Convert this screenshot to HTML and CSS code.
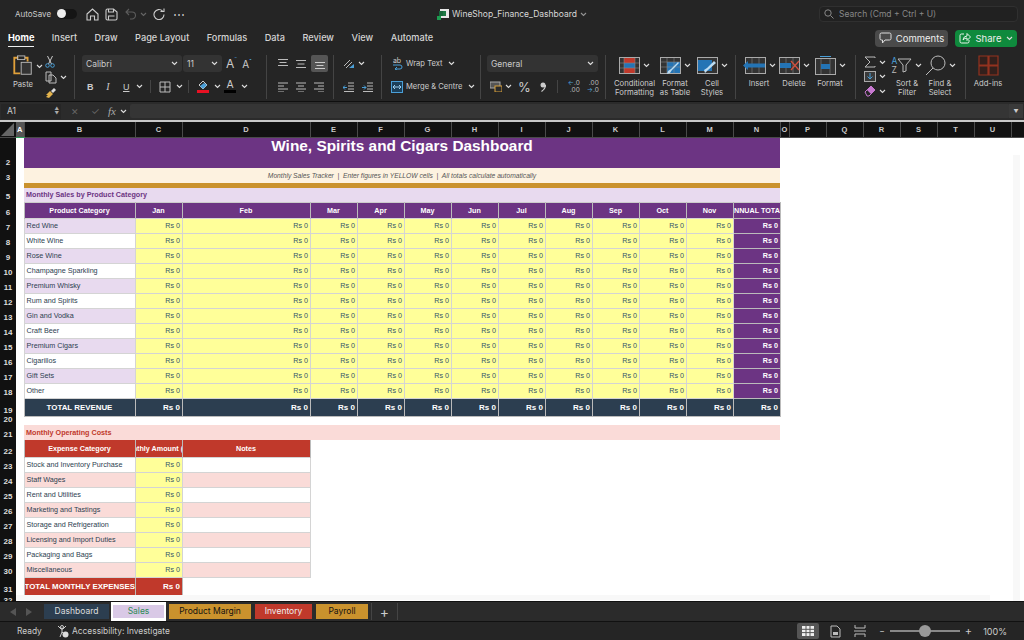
FILE: index.html
```html
<!DOCTYPE html>
<html lang="en">
<head>
    <meta charset="UTF-8">
    <title>WineShop_Finance_Dashboard</title>
    <link rel="stylesheet" href="styles.css">
</head>
<body>
    <svg class="defs" width="0" height="0">
        <symbol id="chev" viewBox="0 0 7 5"><path d="M1 1l2.500 2.500L6 1" fill="none" stroke="#ddd" stroke-width="1.100"/></symbol>
        <symbol id="lines-l" viewBox="0 0 12 10"><path d="M1 1h10M1 4h6M1 7h10M1 10h6" fill="none" stroke="#bbb"/></symbol>
        <symbol id="lines-c" viewBox="0 0 12 10"><path d="M1 1h10M3 4h6M1 7h10M3 10h6" fill="none" stroke="#bbb"/></symbol>
        <symbol id="lines-r" viewBox="0 0 12 10"><path d="M1 1h10M5 4h6M1 7h10M5 10h6" fill="none" stroke="#bbb"/></symbol>
        <symbol id="va-top" viewBox="0 0 12 12"><path d="M1 1.500h10M2.500 4.500h7M1 7.500h10" fill="none" stroke="#bbb"/></symbol>
        <symbol id="va-mid" viewBox="0 0 12 12"><path d="M1 2.500h10M2.500 6h7M1 9.500h10" fill="none" stroke="#bbb"/></symbol>
        <symbol id="va-bot" viewBox="0 0 12 12"><path d="M1 4.500h10M2.500 7.500h7M1 10.500h10" fill="none" stroke="#ccc"/></symbol>
    </svg>

    <header class="titlebar">
        <div class="quick">
            <span class="autosave">AutoSave</span>
            <span class="toggle"><span class="knob"></span></span>
            <svg class="q-home" width="13" height="13" viewBox="0 0 13 13"><path d="M1 6l5.500-5L12 6v6H8.500V8h-4v4H1z" fill="none" stroke="#ccc" stroke-width="1.100"/></svg>
            <svg class="q-save" width="13" height="13" viewBox="0 0 13 13"><path d="M1 2.500Q1 1 2.500 1h6L12 4v6.500Q12 12 10.500 12h-8Q1 12 1 10.500zM3.500 1v3h5V1M3.500 12V8h6" fill="none" stroke="#ccc" stroke-width="1.100"/></svg>
            <svg class="q-undo" width="12" height="12" viewBox="0 0 12 12"><path d="M4 1L1 4l3 3M1 4h6a3.500 3.500 0 0 1 0 7H5" fill="none" stroke="#5c5c5c" stroke-width="1.100"/></svg>
            <svg class="q-chev" width="7" height="5"><use href="#chev" opacity=".35"/></svg>
            <svg class="q-redo" width="12" height="12" viewBox="0 0 12 12"><path d="M9.500 2.500A5 5 0 1 0 11 6M7.500 3H11V0" fill="none" stroke="#ccc" stroke-width="1.100" transform="translate(0 .5)"/></svg>
            <span class="dots">&#8943;</span>
        </div>
        <div class="doc">
            <svg width="12" height="12" viewBox="0 0 12 12"><rect x="3" y="1" width="9" height="9" fill="#e8e8e8"/><rect x="6" y="3" width="3" height="5" fill="#1e7a45"/><rect x="0" y="8" width="4" height="4" fill="#1d9c50"/><rect x="2" y="3" width="4" height="5" fill="#17693b"/></svg>
            <span>WineShop_Finance_Dashboard</span>
            <svg width="7" height="5"><use href="#chev" opacity=".6"/></svg>
        </div>
        <div class="search-wrap">
            <div class="search">
                <svg width="10" height="10" viewBox="0 0 10 10"><circle cx="4" cy="4" r="3.200" fill="none" stroke="#888"/><path d="M6.500 6.500L9.500 9.500" stroke="#888"/></svg>
                <span>Search (Cmd + Ctrl + U)</span>
            </div>
        </div>
    </header>

    <nav class="menubar">
        <a class="menu active">Home</a>
        <a class="menu">Insert</a>
        <a class="menu">Draw</a>
        <a class="menu">Page Layout</a>
        <a class="menu">Formulas</a>
        <a class="menu">Data</a>
        <a class="menu">Review</a>
        <a class="menu">View</a>
        <a class="menu">Automate</a>
        <span class="menu-space"></span>
        <button class="comments">
            <svg width="13" height="12" viewBox="0 0 13 12"><path d="M2.500 1h8Q12 1 12 2.500v4Q12 8 10.500 8H6L3.500 11V8h-1Q1 8 1 6.500v-4Q1 1 2.500 1z" fill="none" stroke="#ddd"/></svg>
            Comments
        </button>
        <button class="share">
            <svg width="12" height="12" viewBox="0 0 12 12"><path d="M5 2H2.500Q1 2 1 3.500v6Q1 11 2.500 11h6Q10 11 10 9.500V8M4 8Q4.500 4 8 4V1.500L11.500 5 8 8.500V6Q5.500 6 4 8z" fill="none" stroke="#e8f5ec"/></svg>
            Share
            <svg width="7" height="5"><use href="#chev"/></svg>
        </button>
    </nav>

    <section class="ribbon">
        <div class="group g-clip">
            <div class="paste">
                <svg width="22" height="22" viewBox="0 0 22 24"><path d="M6 3H1.500v17H8" fill="none" stroke="#e0a03a" stroke-width="2"/><path d="M13 3h3v4" fill="none" stroke="#e0a03a" stroke-width="2"/><rect x="5" y="1" width="8" height="4" fill="none" stroke="#bbb"/><rect x="9" y="8" width="11" height="13" fill="#333" stroke="#bbb"/></svg>
                <span class="label">Paste</span>
            </div>
            <svg class="c-chev" width="7" height="5"><use href="#chev"/></svg>
            <div class="clip-tools">
                <svg width="10" height="12" viewBox="0 0 10 12"><path d="M2.500 0l4 8M7.500 0l-4 8" stroke="#ccc" fill="none"/><circle cx="2.500" cy="9.500" r="1.800" fill="none" stroke="#4a9fd8"/><circle cx="7.500" cy="9.500" r="1.800" fill="none" stroke="#4a9fd8"/></svg>
                <div class="tool-row">
                    <svg width="12" height="13" viewBox="0 0 12 13"><path d="M1 1h5v9H1zM4 4h4l3 3v5H4z" fill="#2a2a2a" stroke="#bbb"/></svg>
                    <svg width="7" height="5"><use href="#chev"/></svg>
                </div>
                <svg width="12" height="12" viewBox="0 0 12 12"><path d="M5 4l3 3-4 4-3-1 2-2-2 0z" fill="#e3b34c"/><path d="M6 4l3-3 2 2-3 3z" fill="#ddd"/></svg>
            </div>
        </div>

        <div class="group g-font">
            <div class="line">
                <div class="select font-select"><span>Calibri</span><svg width="7" height="5"><use href="#chev"/></svg></div>
                <div class="select size-select"><span>11</span><svg width="7" height="5"><use href="#chev"/></svg></div>
                <span class="grow">A<sup>&#710;</sup></span>
                <span class="shrink">A<sup>&#711;</sup></span>
            </div>
            <div class="line font-line">
                <b class="f-b">B</b>
                <i class="f-i">I</i>
                <u class="f-u">U</u>
                <svg width="7" height="5"><use href="#chev"/></svg>
                <span class="vsep vsep-a"></span>
                <svg width="12" height="12" viewBox="0 0 12 12"><path d="M1 1h10v10H1zM6 1v10M1 6h10" fill="none" stroke="#bbb"/></svg>
                <svg width="7" height="5"><use href="#chev"/></svg>
                <span class="vsep"></span>
                <svg width="12" height="13" viewBox="0 0 12 13"><path d="M6 1l4 4-4 4-4-4z" fill="none" stroke="#ccc"/><path d="M7 3l3 2-4 4-3-3z" fill="#4a9fd8"/><rect y="10" width="12" height="3" fill="#e81123"/></svg>
                <svg width="7" height="5"><use href="#chev"/></svg>
                <span class="color-a">A</span>
                <svg width="7" height="5"><use href="#chev"/></svg>
            </div>
        </div>

        <div class="group g-align">
            <div class="line">
                <svg width="12" height="12"><use href="#va-top"/></svg>
                <svg width="12" height="12"><use href="#va-mid"/></svg>
                <span class="picked"><svg width="12" height="12"><use href="#va-bot"/></svg></span>
            </div>
            <div class="line">
                <svg width="12" height="10"><use href="#lines-l"/></svg>
                <svg width="12" height="10"><use href="#lines-c"/></svg>
                <svg width="12" height="10"><use href="#lines-r"/></svg>
            </div>
        </div>

        <div class="group g-orient">
            <div class="line">
                <svg width="12" height="12" viewBox="0 0 12 12"><path d="M1 8l6-6M3 10l6-6" stroke="#bbb" fill="none"/><path d="M6 10l5-4v4z" fill="#4a9fd8"/></svg>
                <svg width="7" height="5"><use href="#chev"/></svg>
            </div>
            <div class="line">
                <svg width="11" height="10" viewBox="0 0 11 10"><path d="M5 1h6M5 4h6M5 7h6M1 9.500h10" stroke="#bbb"/><path d="M4 5.500H0M2 3.500L0 5.500l2 2" stroke="#4a9fd8" fill="none"/></svg>
                <svg width="11" height="10" viewBox="0 0 11 10"><path d="M5 1h6M5 4h6M5 7h6M1 9.500h10" stroke="#bbb"/><path d="M0 5.500h4M2 3.500l2 2-2 2" stroke="#4a9fd8" fill="none"/></svg>
            </div>
        </div>

        <div class="group g-wrap">
            <div class="line">
                <span class="ab"><span class="ab-t">ab</span><svg width="12" height="6" viewBox="0 0 12 6"><path d="M2 1h7a2 2 0 0 1 0 4H4M6 3L4 5l2 1" fill="none" stroke="#4a9fd8"/></svg></span>
                <span class="txt">Wrap Text</span>
                <svg width="7" height="5"><use href="#chev"/></svg>
            </div>
            <div class="line">
                <svg width="12" height="12" viewBox="0 0 12 12"><rect x=".5" y=".5" width="11" height="11" fill="#1c3f59" stroke="#4a9fd8"/><path d="M2 6h8M2 6l2-2M2 6l2 2M10 6L8 4M10 6L8 8" fill="none" stroke="#9fd0f0"/></svg>
                <span class="txt">Merge &amp; Centre</span>
                <svg width="7" height="5"><use href="#chev"/></svg>
            </div>
        </div>

        <div class="group g-num">
            <div class="line">
                <div class="select num-select"><span>General</span><svg width="7" height="5"><use href="#chev"/></svg></div>
            </div>
            <div class="line">
                <svg class="n-cur" width="12" height="11" viewBox="0 0 12 11"><rect y="1" width="10" height="6" fill="#555" stroke="#aaa"/><rect x="5" y="5" width="7" height="6" fill="#2a2a2a" stroke="#d9a13b"/></svg>
                <svg width="7" height="5"><use href="#chev"/></svg>
                <span class="n-pct">%</span>
                <svg class="n-comma" width="6" height="10" viewBox="0 0 6 10"><circle cx="3" cy="3" r="2.500" fill="#ccc"/><path d="M5.500 3Q5.500 7 1.500 9.500" fill="none" stroke="#ccc" stroke-width="1.300"/></svg>
                <span class="vsep n-sep"></span>
                <span class="dec"><em>&#8592;</em>.0<br>.00</span>
                <span class="dec"><em></em>.00<br><em>&#8594;</em>.0</span>
            </div>
        </div>

        <div class="group g-styles">
            <div class="big b-cond">
                <div class="big-icon">
                    <svg width="21" height="17" viewBox="0 0 21 17"><rect x=".5" y=".5" width="20" height="16" fill="#333" stroke="#aaa"/><path d="M5 1h11v5H5z" fill="#c0392b"/><path d="M5 6h11v5H5z" fill="#2474b5"/><path d="M5 11h11v5H5z" fill="#c0392b"/><path d="M5 1v15M16 1v15M1 6h19M1 11h19" stroke="#888" stroke-width=".6"/></svg>
                    <svg width="7" height="5"><use href="#chev"/></svg>
                </div>
                <span class="label">Conditional<br>Formatting</span>
            </div>
            <div class="big b-table">
                <div class="big-icon">
                    <svg width="21" height="17" viewBox="0 0 21 17"><rect x=".5" y=".5" width="20" height="16" fill="#333" stroke="#aaa"/><rect x="7" y="5" width="13" height="11" fill="#2474b5"/><path d="M7 1v15M14 1v15M1 5h19M1 10h19" stroke="#888" stroke-width=".6"/><path d="M19 6l-7 7-2 3-3 1 1-3 3-2 7-7z" fill="#bcdcf2"/></svg>
                    <svg width="7" height="5"><use href="#chev"/></svg>
                </div>
                <span class="label">Format<br>as Table</span>
            </div>
            <div class="big b-cell">
                <div class="big-icon">
                    <svg width="21" height="17" viewBox="0 0 21 17"><rect x=".5" y=".5" width="20" height="16" fill="#333" stroke="#aaa"/><rect x="1" y="3" width="14" height="11" fill="#2474b5"/><path d="M19 6l-8 7-3 3-1-3 3-2 7-7z" fill="#bcdcf2"/></svg>
                    <svg width="7" height="5"><use href="#chev"/></svg>
                </div>
                <span class="label">Cell<br>Styles</span>
            </div>
        </div>

        <div class="group g-cells">
            <div class="big b-ins">
                <div class="big-icon">
                    <svg width="23" height="17" viewBox="0 0 23 17"><rect x="2.500" y=".5" width="20" height="16" fill="#333" stroke="#aaa"/><path d="M9 1v15M16 1v15" stroke="#888" stroke-width=".6"/><path d="M0 8.500L5 4v2.500h17v4H5V13z" fill="#2474b5"/></svg>
                    <svg width="7" height="5"><use href="#chev"/></svg>
                </div>
                <span class="label">Insert</span>
            </div>
            <div class="big b-del">
                <div class="big-icon">
                    <svg width="21" height="17" viewBox="0 0 21 17"><rect x=".5" y=".5" width="20" height="16" fill="#333" stroke="#aaa"/><path d="M7 1v15M14 1v15" stroke="#888" stroke-width=".6"/><rect x="1" y="6" width="11" height="5" fill="#2474b5"/><path d="M12 4l8 9M20 4l-8 9" stroke="#d1503f" stroke-width="1.300"/></svg>
                    <svg width="7" height="5"><use href="#chev"/></svg>
                </div>
                <span class="label">Delete</span>
            </div>
            <div class="big b-fmt">
                <div class="big-icon">
                    <svg width="21" height="19" viewBox="0 0 21 19"><path d="M5 .5h11" stroke="#4a9fd8"/><rect x=".5" y="2.500" width="20" height="16" fill="#333" stroke="#aaa"/><path d="M6 3v15M15 3v15" stroke="#888" stroke-width=".6"/><rect x="6" y="8" width="9" height="5" fill="#2474b5"/></svg>
                    <svg width="7" height="5"><use href="#chev"/></svg>
                </div>
                <span class="label">Format</span>
            </div>
        </div>

        <div class="group g-edit">
            <div class="edit-col">
                <div class="tool-row">
                    <svg width="12" height="12" viewBox="0 0 12 12"><path d="M11 2V1H1l5 5-5 5h10v-1" fill="none" stroke="#bbb"/></svg>
                    <svg width="7" height="5"><use href="#chev"/></svg>
                </div>
                <div class="tool-row">
                    <svg width="12" height="11" viewBox="0 0 12 11"><rect x=".5" y=".5" width="11" height="10" fill="#3a3a3a" stroke="#aaa"/><path d="M6 2v6M3.500 5.500L6 8l2.500-2.500" fill="none" stroke="#4a9fd8"/></svg>
                    <svg width="7" height="5"><use href="#chev"/></svg>
                </div>
                <div class="tool-row">
                    <svg width="12" height="12" viewBox="0 0 12 12"><path d="M1 7l6-6 4 4-6 6H3z" fill="none" stroke="#c779d0"/><path d="M3 5l4 4 4-4-4-4z" fill="#c779d0"/></svg>
                    <svg width="7" height="5"><use href="#chev"/></svg>
                </div>
            </div>
            <div class="big b-sort">
                <div class="big-icon">
                    <span class="az"><span class="az-a">A</span><span>Z</span></span>
                    <svg width="15" height="15" viewBox="0 0 15 15"><path d="M1 1h13L9 7v6l-3 1V7z" fill="none" stroke="#bbb"/></svg>
                    <svg width="7" height="5"><use href="#chev"/></svg>
                </div>
                <span class="label">Sort &amp;<br>Filter</span>
            </div>
            <div class="big b-find">
                <div class="big-icon">
                    <svg width="21" height="21" viewBox="0 0 21 21"><circle cx="13" cy="8" r="7" fill="none" stroke="#bbb"/><path d="M8 13L1 20" stroke="#bbb"/></svg>
                    <svg width="7" height="5"><use href="#chev"/></svg>
                </div>
                <span class="label">Find &amp;<br>Select</span>
            </div>
        </div>

        <div class="big b-add">
            <svg width="21" height="21" viewBox="0 0 21 21"><path d="M1 1h9v9H1zM11 1h9v9h-9zM1 11h9v9H1zM11 11h9v9h-9z" fill="#33201c" stroke="#93321f" stroke-width="1.200"/></svg>
            <span class="label">Add-ins</span>
        </div>
    </section>

    <section class="formula">
        <div class="namebox"><span>A1</span><span class="spin">&#9650;<br>&#9660;</span></div>
        <span class="f-x">&#10005;</span>
        <span class="f-ok">&#10003;</span>
        <span class="f-fx"><i>fx</i></span>
        <svg width="7" height="5"><use href="#chev"/></svg>
        <div class="f-input"></div>
        <div class="f-drop">&#9660;</div>
    </section>

    <main class="sheet">
        <table class="cells">
            <colgroup>
                <col class="c-row"><col class="c-a"><col class="c-b"><col class="c-m"><col class="c-d">
                <col class="c-m"><col class="c-m"><col class="c-m"><col class="c-m"><col class="c-m">
                <col class="c-m"><col class="c-m"><col class="c-m"><col class="c-m"><col class="c-m">
                <col class="c-o"><col class="c-p"><col class="c-p"><col class="c-p"><col class="c-p"><col class="c-p"><col class="c-p"><col class="c-v">
            </colgroup>
            <tr class="col-heads">
                <th class="corner"><svg width="16" height="15" viewBox="0 0 16 15"><path d="M14 1v13H1z" fill="#666"/></svg></th>
                <th class="col-on">A</th><th>B</th><th>C</th><th>D</th><th>E</th><th>F</th><th>G</th><th>H</th><th>I</th><th>J</th><th>K</th><th>L</th><th>M</th><th>N</th><th>O</th><th>P</th><th>Q</th><th>R</th><th>S</th><th>T</th><th>U</th><th></th>
            </tr>
            <tr class="r30"><th class="rn">2</th><td></td><td colspan="13" class="title"><div class="title-text">Wine, Spirits and Cigars Dashboard</div></td><td colspan="8"></td></tr>
            <tr class="r15"><th class="rn">3</th><td></td><td colspan="13" class="sub">Monthly Sales Tracker &nbsp;|&nbsp; Enter figures in YELLOW cells &nbsp;|&nbsp; All totals calculate automatically</td><td colspan="8"></td></tr>
            <tr class="r5"><th class="rn"></th><td></td><td colspan="13" class="gold"></td><td colspan="8"></td></tr>
            <tr class="r14"><th class="rn">5</th><td></td><td colspan="13" class="sec-purple">Monthly Sales by Product Category</td><td colspan="8"></td></tr>
            <tr class="r16"><th class="rn">6</th><td></td><th class="h-purple">Product Category</th><th class="h-purple">Jan</th><th class="h-purple">Feb</th><th class="h-purple">Mar</th><th class="h-purple">Apr</th><th class="h-purple">May</th><th class="h-purple">Jun</th><th class="h-purple">Jul</th><th class="h-purple">Aug</th><th class="h-purple">Sep</th><th class="h-purple">Oct</th><th class="h-purple">Nov</th><th class="h-purple"><div class="clip">ANNUAL TOTAL</div></th><td colspan="8"></td></tr>
            <tr class="r15"><th class="rn">7</th><td></td><td class="name lilac">Red Wine</td><td class="y">Rs 0</td><td class="y">Rs 0</td><td class="y">Rs 0</td><td class="y">Rs 0</td><td class="y">Rs 0</td><td class="y">Rs 0</td><td class="y">Rs 0</td><td class="y">Rs 0</td><td class="y">Rs 0</td><td class="y">Rs 0</td><td class="y">Rs 0</td><td class="tot">Rs 0</td><td colspan="8"></td></tr>
            <tr class="r15"><th class="rn">8</th><td></td><td class="name">White Wine</td><td class="y">Rs 0</td><td class="y">Rs 0</td><td class="y">Rs 0</td><td class="y">Rs 0</td><td class="y">Rs 0</td><td class="y">Rs 0</td><td class="y">Rs 0</td><td class="y">Rs 0</td><td class="y">Rs 0</td><td class="y">Rs 0</td><td class="y">Rs 0</td><td class="tot">Rs 0</td><td colspan="8"></td></tr>
            <tr class="r15"><th class="rn">9</th><td></td><td class="name lilac">Rose Wine</td><td class="y">Rs 0</td><td class="y">Rs 0</td><td class="y">Rs 0</td><td class="y">Rs 0</td><td class="y">Rs 0</td><td class="y">Rs 0</td><td class="y">Rs 0</td><td class="y">Rs 0</td><td class="y">Rs 0</td><td class="y">Rs 0</td><td class="y">Rs 0</td><td class="tot">Rs 0</td><td colspan="8"></td></tr>
            <tr class="r15"><th class="rn">10</th><td></td><td class="name">Champagne Sparkling</td><td class="y">Rs 0</td><td class="y">Rs 0</td><td class="y">Rs 0</td><td class="y">Rs 0</td><td class="y">Rs 0</td><td class="y">Rs 0</td><td class="y">Rs 0</td><td class="y">Rs 0</td><td class="y">Rs 0</td><td class="y">Rs 0</td><td class="y">Rs 0</td><td class="tot">Rs 0</td><td colspan="8"></td></tr>
            <tr class="r15"><th class="rn">11</th><td></td><td class="name lilac">Premium Whisky</td><td class="y">Rs 0</td><td class="y">Rs 0</td><td class="y">Rs 0</td><td class="y">Rs 0</td><td class="y">Rs 0</td><td class="y">Rs 0</td><td class="y">Rs 0</td><td class="y">Rs 0</td><td class="y">Rs 0</td><td class="y">Rs 0</td><td class="y">Rs 0</td><td class="tot">Rs 0</td><td colspan="8"></td></tr>
            <tr class="r15"><th class="rn">12</th><td></td><td class="name">Rum and Spirits</td><td class="y">Rs 0</td><td class="y">Rs 0</td><td class="y">Rs 0</td><td class="y">Rs 0</td><td class="y">Rs 0</td><td class="y">Rs 0</td><td class="y">Rs 0</td><td class="y">Rs 0</td><td class="y">Rs 0</td><td class="y">Rs 0</td><td class="y">Rs 0</td><td class="tot">Rs 0</td><td colspan="8"></td></tr>
            <tr class="r15"><th class="rn">13</th><td></td><td class="name lilac">Gin and Vodka</td><td class="y">Rs 0</td><td class="y">Rs 0</td><td class="y">Rs 0</td><td class="y">Rs 0</td><td class="y">Rs 0</td><td class="y">Rs 0</td><td class="y">Rs 0</td><td class="y">Rs 0</td><td class="y">Rs 0</td><td class="y">Rs 0</td><td class="y">Rs 0</td><td class="tot">Rs 0</td><td colspan="8"></td></tr>
            <tr class="r15"><th class="rn">14</th><td></td><td class="name">Craft Beer</td><td class="y">Rs 0</td><td class="y">Rs 0</td><td class="y">Rs 0</td><td class="y">Rs 0</td><td class="y">Rs 0</td><td class="y">Rs 0</td><td class="y">Rs 0</td><td class="y">Rs 0</td><td class="y">Rs 0</td><td class="y">Rs 0</td><td class="y">Rs 0</td><td class="tot">Rs 0</td><td colspan="8"></td></tr>
            <tr class="r15"><th class="rn">15</th><td></td><td class="name lilac">Premium Cigars</td><td class="y">Rs 0</td><td class="y">Rs 0</td><td class="y">Rs 0</td><td class="y">Rs 0</td><td class="y">Rs 0</td><td class="y">Rs 0</td><td class="y">Rs 0</td><td class="y">Rs 0</td><td class="y">Rs 0</td><td class="y">Rs 0</td><td class="y">Rs 0</td><td class="tot">Rs 0</td><td colspan="8"></td></tr>
            <tr class="r15"><th class="rn">16</th><td></td><td class="name">Cigarillos</td><td class="y">Rs 0</td><td class="y">Rs 0</td><td class="y">Rs 0</td><td class="y">Rs 0</td><td class="y">Rs 0</td><td class="y">Rs 0</td><td class="y">Rs 0</td><td class="y">Rs 0</td><td class="y">Rs 0</td><td class="y">Rs 0</td><td class="y">Rs 0</td><td class="tot">Rs 0</td><td colspan="8"></td></tr>
            <tr class="r15"><th class="rn">17</th><td></td><td class="name lilac">Gift Sets</td><td class="y">Rs 0</td><td class="y">Rs 0</td><td class="y">Rs 0</td><td class="y">Rs 0</td><td class="y">Rs 0</td><td class="y">Rs 0</td><td class="y">Rs 0</td><td class="y">Rs 0</td><td class="y">Rs 0</td><td class="y">Rs 0</td><td class="y">Rs 0</td><td class="tot">Rs 0</td><td colspan="8"></td></tr>
            <tr class="r15"><th class="rn">18</th><td></td><td class="name">Other</td><td class="y">Rs 0</td><td class="y">Rs 0</td><td class="y">Rs 0</td><td class="y">Rs 0</td><td class="y">Rs 0</td><td class="y">Rs 0</td><td class="y">Rs 0</td><td class="y">Rs 0</td><td class="y">Rs 0</td><td class="y">Rs 0</td><td class="y">Rs 0</td><td class="tot">Rs 0</td><td colspan="8"></td></tr>
            <tr class="r18"><th class="rn">19</th><td></td><td class="navy-name">TOTAL REVENUE</td><td class="navy">Rs 0</td><td class="navy">Rs 0</td><td class="navy">Rs 0</td><td class="navy">Rs 0</td><td class="navy">Rs 0</td><td class="navy">Rs 0</td><td class="navy">Rs 0</td><td class="navy">Rs 0</td><td class="navy">Rs 0</td><td class="navy">Rs 0</td><td class="navy">Rs 0</td><td class="navy">Rs 0</td><td colspan="8"></td></tr>
            <tr class="r9"><th class="rn">20</th><td colspan="22"></td></tr>
            <tr class="r15"><th class="rn">21</th><td></td><td colspan="13" class="sec-red">Monthly Operating Costs</td><td colspan="8"></td></tr>
            <tr class="r17"><th class="rn">22</th><td></td><th class="h-red">Expense Category</th><th class="h-red"><div class="clip">Monthly Amount (Rs)</div></th><th class="h-red">Notes</th><td colspan="18"></td></tr>
            <tr class="r15"><th class="rn">23</th><td></td><td class="name">Stock and Inventory Purchase</td><td class="y">Rs 0</td><td class="note"></td><td colspan="18"></td></tr>
            <tr class="r15"><th class="rn">24</th><td></td><td class="name pink">Staff Wages</td><td class="y">Rs 0</td><td class="note pink"></td><td colspan="18"></td></tr>
            <tr class="r15"><th class="rn">25</th><td></td><td class="name">Rent and Utilities</td><td class="y">Rs 0</td><td class="note"></td><td colspan="18"></td></tr>
            <tr class="r15"><th class="rn">26</th><td></td><td class="name pink">Marketing and Tastings</td><td class="y">Rs 0</td><td class="note pink"></td><td colspan="18"></td></tr>
            <tr class="r15"><th class="rn">27</th><td></td><td class="name">Storage and Refrigeration</td><td class="y">Rs 0</td><td class="note"></td><td colspan="18"></td></tr>
            <tr class="r15"><th class="rn">28</th><td></td><td class="name pink">Licensing and Import Duties</td><td class="y">Rs 0</td><td class="note pink"></td><td colspan="18"></td></tr>
            <tr class="r15"><th class="rn">29</th><td></td><td class="name">Packaging and Bags</td><td class="y">Rs 0</td><td class="note"></td><td colspan="18"></td></tr>
            <tr class="r15"><th class="rn">30</th><td></td><td class="name pink">Miscellaneous</td><td class="y">Rs 0</td><td class="note pink"></td><td colspan="18"></td></tr>
            <tr class="r18"><th class="rn">31</th><td></td><td class="red-name">TOTAL MONTHLY EXPENSES</td><td class="red-amt">Rs 0</td><td colspan="19"></td></tr>
            <tr class="r15"><th class="rn rn-last">32</th><td colspan="22"></td></tr>
        </table>
        <div class="scroll-v"></div>
        <div class="scroll-h"></div>
    </main>

    <nav class="tabs">
        <svg class="tab-nav" width="6" height="8" viewBox="0 0 6 8"><path d="M6 0v8L0 4z" fill="#555"/></svg>
        <svg class="tab-nav tab-next" width="6" height="8" viewBox="0 0 6 8"><path d="M0 0v8l6-4z" fill="#555"/></svg>
        <a class="tab t-navy">Dashboard</a>
        <a class="tab t-sales"><span>Sales</span></a>
        <a class="tab t-gold">Product Margin</a>
        <a class="tab t-red">Inventory</a>
        <a class="tab t-gold t-pay">Payroll</a>
        <span class="tab-add">+</span>
    </nav>

    <footer class="status">
        <span class="ready">Ready</span>
        <svg width="12" height="13" viewBox="0 0 12 13"><circle cx="5" cy="2" r="1.500" fill="none" stroke="#ccc"/><path d="M1 1l3 3h2l3-3M5 4v3L3 12M5 7l2 2" fill="none" stroke="#ccc"/><circle cx="8.500" cy="9.500" r="3" fill="#ddd"/></svg>
        <span class="access">Accessibility: Investigate</span>
        <span class="menu-space"></span>
        <span class="view-on"><svg width="12" height="10" viewBox="0 0 12 10"><path d="M0 0h12v10H0z" fill="#eee"/><path d="M4 0v10M8 0v10M0 3.300h12M0 6.600h12" stroke="#555"/></svg></span>
        <svg class="v-page" width="11" height="13" viewBox="0 0 11 13"><path d="M1 1h6l3 3v8H1z" fill="none" stroke="#bbb"/><rect x="3" y="7" width="5" height="3" fill="#bbb"/></svg>
        <svg class="v-break" width="12" height="12" viewBox="0 0 12 12"><path d="M1 0v3h10V0M1 12V9h10v3M0 6h12" fill="none" stroke="#bbb"/></svg>
        <span class="zoom-minus">&#8722;</span>
        <span class="slider"><span class="slider-knob"></span></span>
        <span class="zoom-plus">+</span>
        <span class="zoom-val">100%</span>
    </footer>
</body>
</html>
```

FILE: styles.css
```css
* {
    box-sizing: border-box;
}

body {
    margin: 0;
    width: 1024px;
    height: 640px;
    overflow: hidden;
    display: flex;
    flex-direction: column;
    background: #252525;
    color: #ddd;
    font-family: "Inter", "Liberation Sans", sans-serif;
    font-size: 8px;
}

.defs {
    position: absolute;
}

svg {
    flex: none;
    display: block;
}

/* title bar */
.titlebar {
    height: 28px;
    flex: none;
    display: grid;
    grid-template-columns: 1fr auto 1fr;
    align-items: center;
}

.quick {
    display: flex;
    align-items: center;
    padding-left: 15px;
}

.autosave {
    font-size: 8px;
    color: #ccc;
    width: 42px;
}

.toggle {
    width: 20px;
    height: 10px;
    border-radius: 5px;
    background: #151515;
    display: flex;
}

.knob {
    width: 9px;
    height: 9px;
    border-radius: 50%;
    background: #eee;
}

.q-home { margin-left: 9px; }
.q-save { margin-left: 6px; }
.q-undo { margin-left: 7px; }
.q-chev { margin-left: 3px; }
.q-redo { margin-left: 6px; }

.dots {
    margin-left: 8px;
    font-size: 12px;
    color: #ccc;
}

.doc {
    display: flex;
    align-items: center;
    gap: 3px;
    font-size: 8.500px;
    color: #d8d8d8;
}

.search-wrap {
    display: flex;
    justify-content: flex-end;
    padding-right: 6px;
}

.search {
    width: 199px;
    height: 16px;
    border: 1px solid #303030;
    border-radius: 4px;
    background: #212121;
    display: flex;
    align-items: center;
    gap: 5px;
    padding-left: 4px;
    font-size: 8.500px;
    color: #888;
}

/* menu bar */
.menubar {
    height: 24px;
    flex: none;
    display: flex;
    align-items: center;
    padding: 0 7px 6px 8px;
    gap: 17.500px;
    font-size: 9.200px;
}

.menu {
    color: #d4d4d4;
    font-weight: 500;
}

.menu.active {
    color: #fff;
    font-weight: 700;
    padding-bottom: 3px;
    margin-top: 4px;
    border-bottom: 1.500px solid #eee;
}

.menu-space {
    flex: 1;
}

.comments,
.share {
    height: 17px;
    border: 0;
    border-radius: 4px;
    display: flex;
    align-items: center;
    justify-content: center;
    gap: 4px;
    font-family: inherit;
    font-size: 9.500px;
    color: #eee;
    padding: 0;
}

.comments {
    width: 73px;
    background: #4a4a4a;
    margin-top: 2px;
}

.share {
    width: 62px;
    background: #0f8a3d;
    margin-left: -10.500px;
    margin-top: 2px;
}

/* ribbon */
.ribbon {
    height: 50px;
    flex: none;
    display: flex;
    padding-top: 3px;
    border-bottom: 1px solid #0f0f0f;
}

.group {
    height: 44px;
    border-right: 1px solid #444;
    flex: none;
}

.line {
    height: 17px;
    display: flex;
    align-items: center;
    margin-bottom: 6px;
}

.label {
    font-size: 7.700px;
    line-height: 9px;
    color: #ccc;
    text-align: center;
    white-space: nowrap;
}

.select {
    height: 17px;
    background: #333;
    border-radius: 3px;
    display: flex;
    align-items: center;
    justify-content: space-between;
    padding: 0 4px;
    font-size: 8.500px;
    color: #ccc;
}

.vsep {
    width: 1px;
    height: 13px;
    background: #444;
    margin-right: 3px;
}

.tool-row {
    display: flex;
    align-items: center;
    gap: 3px;
}

.g-clip {
    width: 75px;
    padding-left: 12px;
    display: flex;
}

.paste {
    width: 22px;
    display: flex;
    flex-direction: column;
    align-items: center;
}

.paste .label {
    margin-top: 3px;
}

.c-chev {
    margin: 9px 0 0 2px;
}

.clip-tools {
    margin: 1px 0 0 2px;
    display: flex;
    flex-direction: column;
    gap: 3px;
    align-items: flex-start;
}

.g-font {
    width: 192px;
    padding-left: 7px;
}

.font-select { width: 100px; margin-right: 1px; }
.size-select { width: 39px; }

.grow,
.shrink {
    font-size: 12px;
    color: #ccc;
    margin-left: 4px;
    display: flex;
}

.shrink {
    font-size: 10px;
    margin-left: 5px;
}

.grow sup,
.shrink sup {
    font-size: 7px;
    line-height: 7px;
    color: #4a9fd8;
}

.font-line {
    padding-left: 5px;
    gap: 5px;
    font-family: "Liberation Serif", serif;
}

.f-b { font: 700 9px "Liberation Sans", sans-serif; width: 8px; color: #ccc; }
.f-i { font-size: 10px; width: 10px; text-align: center; color: #ccc; margin-left: 3px; }
.f-u { font: 9px "Liberation Sans", sans-serif; width: 8px; color: #ccc; margin-left: 5px; }
.vsep-a { margin-left: 2px; }

.color-a {
    width: 12px;
    height: 13px;
    border-bottom: 3px solid #000;
    font: 10px/10px "Liberation Sans", sans-serif;
    text-align: center;
    color: #ccc;
    margin-left: -2px;
}

.g-align {
    width: 67px;
    padding-left: 10px;
}

.g-align .line {
    gap: 6px;
}

.picked {
    width: 17px;
    height: 17px;
    background: #555;
    border-radius: 2px;
    display: flex;
    align-items: center;
    justify-content: center;
    margin-left: -2px;
}

.g-orient {
    width: 48px;
    padding-left: 9px;
}

.g-orient .line {
    gap: 3px;
}

.g-orient .line + .line {
    gap: 8px;
}

.g-wrap {
    width: 99px;
    padding-left: 9px;
}

.g-wrap .line {
    gap: 3px;
}

.ab {
    width: 12px;
    display: flex;
    flex-direction: column;
    align-items: center;
}

.ab-t {
    font-size: 7px;
    line-height: 7px;
    color: #ccc;
}

.txt {
    font-size: 7.600px;
    color: #ccc;
    margin-right: 3px;
}

.g-num {
    width: 125px;
    padding-left: 6px;
}

.num-select {
    width: 111px;
}

.n-cur { margin: 0 3px 0 3px; }

.n-pct {
    font-size: 13px;
    color: #ccc;
    margin-left: 6px;
}

.n-comma {
    margin: 0 0 0 9px;
}

.n-sep { margin: 0 8px 0 11px; }

.dec {
    width: 14px;
    font-size: 6.500px;
    line-height: 6.500px;
    color: #bbb;
    text-align: right;
    margin-right: 5px;
}

.dec em {
    color: #4a9fd8;
    font-style: normal;
}

.big {
    display: flex;
    flex-direction: column;
    align-items: center;
    position: relative;
}

.big-icon {
    height: 21px;
    display: flex;
    align-items: center;
    gap: 3px;
}

.big .label {
    margin-top: 3px;
}

.g-styles {
    width: 130px;
    padding-left: 8px;
    display: flex;
}

.b-cond { width: 41px; margin-right: 5px; }
.b-table { width: 30px; margin-right: 7px; }
.b-cell { width: 30px; }

.g-cells {
    width: 120px;
    padding-left: 6px;
    display: flex;
}

.b-ins { width: 34px; }
.b-del { width: 36px; }
.b-fmt { width: 34px; margin-left: 1px; }

.g-edit {
    width: 110px;
    padding-left: 8px;
    display: flex;
}

.edit-col {
    width: 26px;
    display: flex;
    flex-direction: column;
    gap: 3px;
    margin-top: 1px;
}

.b-sort { width: 34px; }
.b-find { width: 34px; margin-left: -1px; }

.az {
    display: flex;
    flex-direction: column;
    font-size: 8.500px;
    line-height: 8.500px;
    color: #bbb;
    margin-right: -3px;
}

.az-a {
    color: #4a9fd8;
}

.b-add {
    width: 44px;
}

.b-add .label {
    margin-top: 3px;
}

/* formula bar */
.formula {
    height: 18px;
    flex: none;
    background: #2b2b2b;
    border-bottom: 0;
    display: flex;
    align-items: center;
    padding-left: 1px;
    color: #666;
}

.namebox {
    width: 60px;
    height: 15px;
    background: #262626;
    display: flex;
    align-items: center;
    justify-content: space-between;
    padding: 0 2px 0 6px;
    font-size: 8.500px;
    color: #ccc;
}

.spin {
    font-size: 4.500px;
    line-height: 5px;
    color: #aaa;
}

.f-x { margin-left: 10px; font-size: 9px; width: 10px; }
.f-ok { margin-left: 10px; font-size: 10px; width: 11px; }

.f-fx {
    margin: 0 1px 0 6px;
    font: italic 11px "Liberation Serif", serif;
    color: #aaa;
    width: 11px;
}

.f-input {
    width: 880px;
    height: 14px;
    margin-left: 3px;
    background: #353535;
    border-radius: 2px;
}

.f-drop {
    width: 14px;
    height: 14px;
    margin-left: -1px;
    background: #3a3a3a;
    color: #ccc;
    font-size: 5px;
    line-height: 14px;
    text-align: center;
}

/* sheet */
.sheet {
    height: 481px;
    flex: none;
    background: #fff;
    border-top: 2px solid #c8c8c8;
    position: relative;
    overflow: hidden;
}

.cells {
    table-layout: fixed;
    width: 1024px;
    border-collapse: collapse;
    font-family: "Liberation Sans", sans-serif;
    font-size: 7.200px;
    color: #2c3e50;
}

.c-row { width: 16px; }
.c-a { width: 8px; }
.c-b { width: 111px; }
.c-m { width: 47px; }
.c-d { width: 128px; }
.c-o { width: 9px; }
.c-p { width: 37px; }
.c-v { width: 13px; }

td, th {
    padding: 0;
    overflow: hidden;
    white-space: nowrap;
}

.col-heads th {
    height: 15px;
    background: #111;
    color: #ccc;
    font-size: 7.500px;
    border: 1px solid #4a4a4a;
    border-width: 0 1px 1px 0;
}

.corner {
    border-right: 0 !important;
}

.col-heads .col-on {
    background: #555;
    color: #fff;
    border-bottom: 1px solid #2e9e5b;
}

.r5 > * { height: 5px; }
.r9 > * { height: 9px; }
.r14 > * { height: 14px; }
.r15 > * { height: 15px; }
.r16 > * { height: 16px; }
.r17 > * { height: 17px; }
.r18 > * { height: 18px; }
.r30 > * { height: 30px; }

.rn {
    background: #111;
    color: #ddd;
    font-size: 8px;
    line-height: 8px;
    vertical-align: bottom;
    padding-bottom: 1px;
}

.rn-last {
    vertical-align: top;
    padding: 2px 0 0;
}

.title {
    background: #6c3483;
    vertical-align: top;
}

.title-text {
    height: 30px;
    font-size: 15.400px;
    line-height: 15px;
    font-weight: 700;
    color: #fff;
    text-align: center;
}

.sub {
    background: #fdf2e0;
    color: #555;
    font-style: italic;
    font-size: 6.700px;
    text-align: center;
}

.gold {
    background: #ca922d;
}

.sec-purple,
.sec-red {
    font-weight: 700;
    padding-left: 2px;
}

.sec-purple {
    background: #e8daef;
    color: #6c3483;
}

.sec-red {
    background: #fadbd8;
    color: #c0392b;
}

.h-purple,
.h-red {
    color: #fff;
    font-size: 7.200px;
    border: 1px solid #bbb;
    border-width: 0 1px;
    text-align: center;
}

.h-purple { background: #6c3483; border-top: 1px solid #ccc; }
.h-red { background: #c0392b; }

.clip {
    display: flex;
    justify-content: center;
    overflow: hidden;
}

.name {
    padding-left: 2px;
    border: 1px solid #d4d4d4;
}

.lilac { background: #e8daef; }
.pink { background: #fadbd8; }

.y {
    background: #ffff99;
    text-align: right;
    padding-right: 1.500px;
    border: 1px solid #d4d4d4;
    color: #34566b;
}

.note {
    border: 1px solid #d4d4d4;
}

.tot,
.navy,
.red-amt {
    font-weight: 700;
    color: #fff;
    text-align: right;
    padding-right: 1.500px;
    border: 1px solid #bbb;
}

.tot { background: #6c3483; }
.navy { background: #2c3e50; font-size: 8px; }
.red-amt { background: #c0392b; font-size: 8px; }

.navy-name,
.red-name {
    font-weight: 700;
    font-size: 7.900px;
    color: #fff;
    text-align: center;
    border: 1px solid #bbb;
}

.navy-name { background: #2c3e50; }
.red-name { background: #c0392b; }

.scroll-v {
    position: absolute;
    right: 4px;
    top: 33px;
    width: 7px;
    bottom: 0;
    background: #f8f8f8;
}

.scroll-h {
    position: absolute;
    left: 16px;
    bottom: 1px;
    width: 974px;
    height: 5px;
    background: #f8f8f8;
}

/* sheet tabs */
.tabs {
    height: 21px;
    flex: none;
    background: #2b2b2b;
    border-top: 1px solid #111;
    border-bottom: 1px solid #111;
    display: flex;
    align-items: center;
    font-size: 8.500px;
}

.tab-nav {
    margin-left: 10px;
}

.tab-next {
    margin-right: 12px;
}

.tab {
    height: 15px;
    line-height: 15px;
    text-align: center;
    color: #111;
}

.t-navy {
    width: 65px;
    background: #2c3e50;
    color: #ddd;
}

.t-sales {
    width: 55px;
    height: 19px;
    margin: 0 3px 0 2px;
    background: #fff;
    padding: 2px;
    display: flex;
}

.t-sales span {
    flex: 1;
    background: #d9c9e6;
    color: #2e8b57;
    line-height: 13px;
    height: 13px;
    margin-top: 1px;
}

.t-gold {
    width: 82px;
    background: #ca922d;
}

.t-red {
    width: 57px;
    margin: 0 4px;
    background: #c0392b;
    color: #eee;
}

.t-pay {
    width: 52px;
}

.tab-add {
    width: 27px;
    margin-left: 3px;
    text-align: center;
    font-size: 14px;
    line-height: 17px;
    color: #ccc;
    border-left: 1px solid #444;
    border-right: 1px solid #444;
}

/* status bar */
.status {
    flex: 1;
    display: flex;
    align-items: center;
    padding: 0 17px;
    font-size: 8.400px;
    color: #ccc;
}

.ready {
    width: 40px;
}

.access {
    margin-left: 3px;
}

.view-on {
    width: 22px;
    height: 16px;
    background: #555;
    border-radius: 2px;
    display: flex;
    align-items: center;
    justify-content: center;
}

.v-page { margin-left: 11px; }
.v-break { margin-left: 13px; }

.zoom-minus { margin-left: 13px; }

.slider {
    width: 70px;
    height: 2px;
    background: #888;
    margin-left: 5px;
    position: relative;
}

.slider-knob {
    position: absolute;
    left: 29px;
    top: -5px;
    width: 12px;
    height: 12px;
    border-radius: 50%;
    background: #999;
}

.zoom-plus { margin-left: 5px; font-size: 11px; }

.zoom-val {
    margin-left: 11px;
    font-size: 9px;
}
```
